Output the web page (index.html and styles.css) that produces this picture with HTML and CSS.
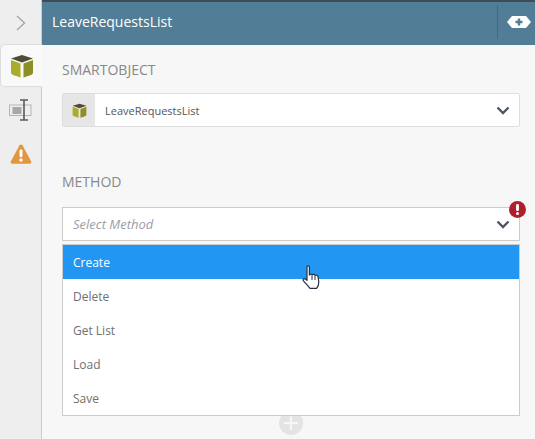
FILE: index.html
```html
<!DOCTYPE html>
<html>
<head>
    <title>LeaveRequestsList</title>
    <link rel="stylesheet" href="styles.css">
</head>
<body>
    <div class="sidebar">
        <div class="toggle">
            <svg width="12" height="16" viewBox="0 0 12 16"><path d="M2 1 L9.5 8 L2 15" fill="none" stroke="#a9a9a9" stroke-width="1.5"/></svg>
        </div>
        <div class="tab active">
            <svg width="24" height="24" viewBox="0 0 24 24">
                <path d="M1 4.5 L12 1 L23 4.5 L12 8.5 Z" fill="#4d4d35"/>
                <path d="M1 6 L10.5 9.5 L10.5 23.5 L3 21 Q1 20.3 1 18.5 Z" fill="#a9ad2b"/>
                <path d="M23 6 L13.5 9.5 L13.5 23.5 L21 21 Q23 20.3 23 18.5 Z" fill="#8b8f25"/>
            </svg>
        </div>
        <div class="tab">
            <svg width="24" height="22" viewBox="0 0 24 22">
                <rect x="0.5" y="6" width="21.5" height="10.5" fill="none" stroke="#b5b5b5"/>
                <rect x="3.5" y="8" width="9" height="7" fill="#a8a8a8"/>
                <path d="M11 1 H19 M11 21 H19 M15 1 V21" fill="none" stroke="#555a60" stroke-width="1.6"/>
            </svg>
        </div>
        <div class="tab">
            <svg width="22" height="22" viewBox="0 0 24 23">
                <path d="M12 1 Q13 1 13.6 2 L23 19.5 Q24 22 21.5 22 H2.5 Q0 22 1 19.5 L10.4 2 Q11 1 12 1 Z" fill="#e2973f"/>
                <rect x="10.4" y="6.5" width="3.2" height="8.5" rx="1.2" fill="#fff"/>
                <circle cx="12" cy="18" r="1.9" fill="#fff"/>
            </svg>
        </div>
    </div>

    <div class="main">
        <div class="header">
            <span class="title">LeaveRequestsList</span>
            <div class="header-action">
                <svg width="24" height="12" viewBox="0 0 24 12">
                    <path d="M5 0 H19 L24 6 L19 12 H5 L0 6 Z" fill="#fff"/>
                    <path d="M12 2.5 V9.5 M8.5 6 H15.5" stroke="#527d97" stroke-width="2.4"/>
                </svg>
            </div>
        </div>

        <div class="content">
            <div class="field-label">SMARTOBJECT</div>
            <div class="select">
                <div class="select-icon">
                    <svg width="15" height="15" viewBox="0 0 24 24">
                        <path d="M1 4.5 L12 1 L23 4.5 L12 8.5 Z" fill="#4d4d35"/>
                        <path d="M1 6 L10.5 9.5 L10.5 23.5 L3 21 Q1 20.3 1 18.5 Z" fill="#a9ad2b"/>
                        <path d="M23 6 L13.5 9.5 L13.5 23.5 L21 21 Q23 20.3 23 18.5 Z" fill="#8b8f25"/>
                    </svg>
                </div>
                <span class="select-text">LeaveRequestsList</span>
                <svg class="chevron" width="14" height="9" viewBox="0 0 14 9"><path d="M1.5 1.5 L7 7 L12.5 1.5" fill="none" stroke="#4e5663" stroke-width="2.4"/></svg>
            </div>

            <div class="field-label method-label">METHOD</div>
            <div class="select method-select">
                <span class="select-text placeholder">Select Method</span>
                <svg class="chevron" width="14" height="9" viewBox="0 0 14 9"><path d="M1.5 1.5 L7 7 L12.5 1.5" fill="none" stroke="#4e5663" stroke-width="2.4"/></svg>
                <svg class="error-badge" width="17" height="17" viewBox="0 0 17 17">
                    <circle cx="8.5" cy="8.5" r="8.5" fill="#b01e2c"/>
                    <rect x="7.1" y="3" width="2.8" height="7" rx="1" fill="#fff"/>
                    <circle cx="8.5" cy="12.6" r="1.5" fill="#fff"/>
                </svg>
            </div>

            <div class="dropdown">
                <div class="option selected">Create</div>
                <div class="option">Delete</div>
                <div class="option">Get List</div>
                <div class="option">Load</div>
                <div class="option">Save</div>
            </div>
        </div>
    </div>

    <div class="add-circle">
        <svg width="14" height="14" viewBox="0 0 14 14"><path d="M7 0 V14 M0 7 H14" stroke="#f7f7f7" stroke-width="2"/></svg>
    </div>

    <svg class="cursor" width="18" height="25" viewBox="0 0 18 25">
        <path d="M5 2 Q5 0.8 6.2 0.8 Q7.4 0.8 7.4 2 V10 Q9 8.6 10.4 9.6 Q12 8.8 13.2 10.2 Q15.2 9.6 16 11.4 L16.8 17 Q16.8 21 14.6 23.4 H8 Q6 21 4.6 19.4 L1.2 15.6 Q0.6 14 2.2 13.6 Q3.6 13.6 5 15.4 Z" fill="#fff" stroke="#2b3040" stroke-width="1.2" stroke-linejoin="round"/>
        <path d="M10 10 V15 M13 10.5 V15" stroke="#2b3040" stroke-width="1"/>
    </svg>
</body>
</html>
```

FILE: styles.css
```css
html, body {
    height: 100%;
}

body {
    font-family: 'Open Sans', sans-serif;
    background-color: #f7f7f7;
    display: flex;
    margin: 0;
    overflow: hidden;
    position: relative;
}

.sidebar {
    width: 41px;
    flex-shrink: 0;
    background-color: #eeeeee;
    border-right: 1px solid #cccccc;
    position: relative;
    z-index: 1;
}

.toggle {
    height: 44px;
    display: flex;
    align-items: center;
    justify-content: center;
    padding-top: 2px;
    box-sizing: border-box;
}

.tab {
    height: 44px;
    display: flex;
    align-items: center;
    justify-content: center;
}

.tab.active {
    background-color: #f9f9f9;
    height: 43px;
    margin-bottom: 1px;
    width: 42px;
    box-sizing: border-box;
    border: 1px solid #dddddd;
    border-right: none;
    border-radius: 5px 0 0 5px;
    padding-left: 1px;
}

.main {
    flex: 1;
    min-width: 0;
}

.header {
    height: 45px;
    box-sizing: border-box;
    background-color: #527d97;
    border-top: 2px solid #3f4c58;
    display: flex;
    align-items: center;
    justify-content: space-between;
    padding-left: 10px;
}

.title {
    color: #ffffff;
    font-size: 14px;
    margin-top: -4px;
}

.header-action {
    width: 38px;
    height: 34px;
    margin-top: -3px;
    box-sizing: border-box;
    padding-right: 4px;
    border-left: 1px solid #3f6a85;
    display: flex;
    align-items: center;
    justify-content: flex-end;
}

.content {
    padding: 0 15px 0 20px;
}

.field-label {
    color: #888888;
    font-size: 14px;
    line-height: 20px;
    padding-top: 15px;
    margin-bottom: 13px;
}

.method-label {
    padding-top: 0;
    margin-top: 45px;
    margin-bottom: 15px;
}

.select {
    height: 34px;
    box-sizing: border-box;
    background-color: #ffffff;
    border: 1px solid #dddddd;
    border-radius: 2px;
    display: flex;
    align-items: center;
    position: relative;
}

.method-select {
    border-color: #cccccc;
    border-radius: 0;
}

.select-icon {
    width: 32px;
    align-self: stretch;
    background-color: #e6e6e6;
    display: flex;
    align-items: center;
    justify-content: center;
}

.select-text {
    color: #555555;
    font-size: 11px;
    padding-left: 10px;
    flex: 1;
}

.placeholder {
    color: #999ea6;
    font-size: 13px;
    font-style: italic;
}

.chevron {
    margin-right: 9px;
}

.error-badge {
    position: absolute;
    top: -7px;
    right: -7px;
}

.dropdown {
    margin-top: 3px;
    background-color: #ffffff;
    border: 1px solid #cccccc;
    position: relative;
    z-index: 1;
}

.option {
    height: 34px;
    line-height: 36px;
    padding-left: 10px;
    color: #707070;
    font-size: 12px;
}

.option.selected {
    background-color: #2196f3;
    color: #ffffff;
}

.add-circle {
    position: absolute;
    left: 279px;
    top: 411px;
    width: 24px;
    height: 24px;
    border-radius: 50%;
    background-color: #e4e4e4;
    display: flex;
    align-items: center;
    justify-content: center;
}

.cursor {
    position: absolute;
    left: 302px;
    top: 265px;
    z-index: 2;
}
```
